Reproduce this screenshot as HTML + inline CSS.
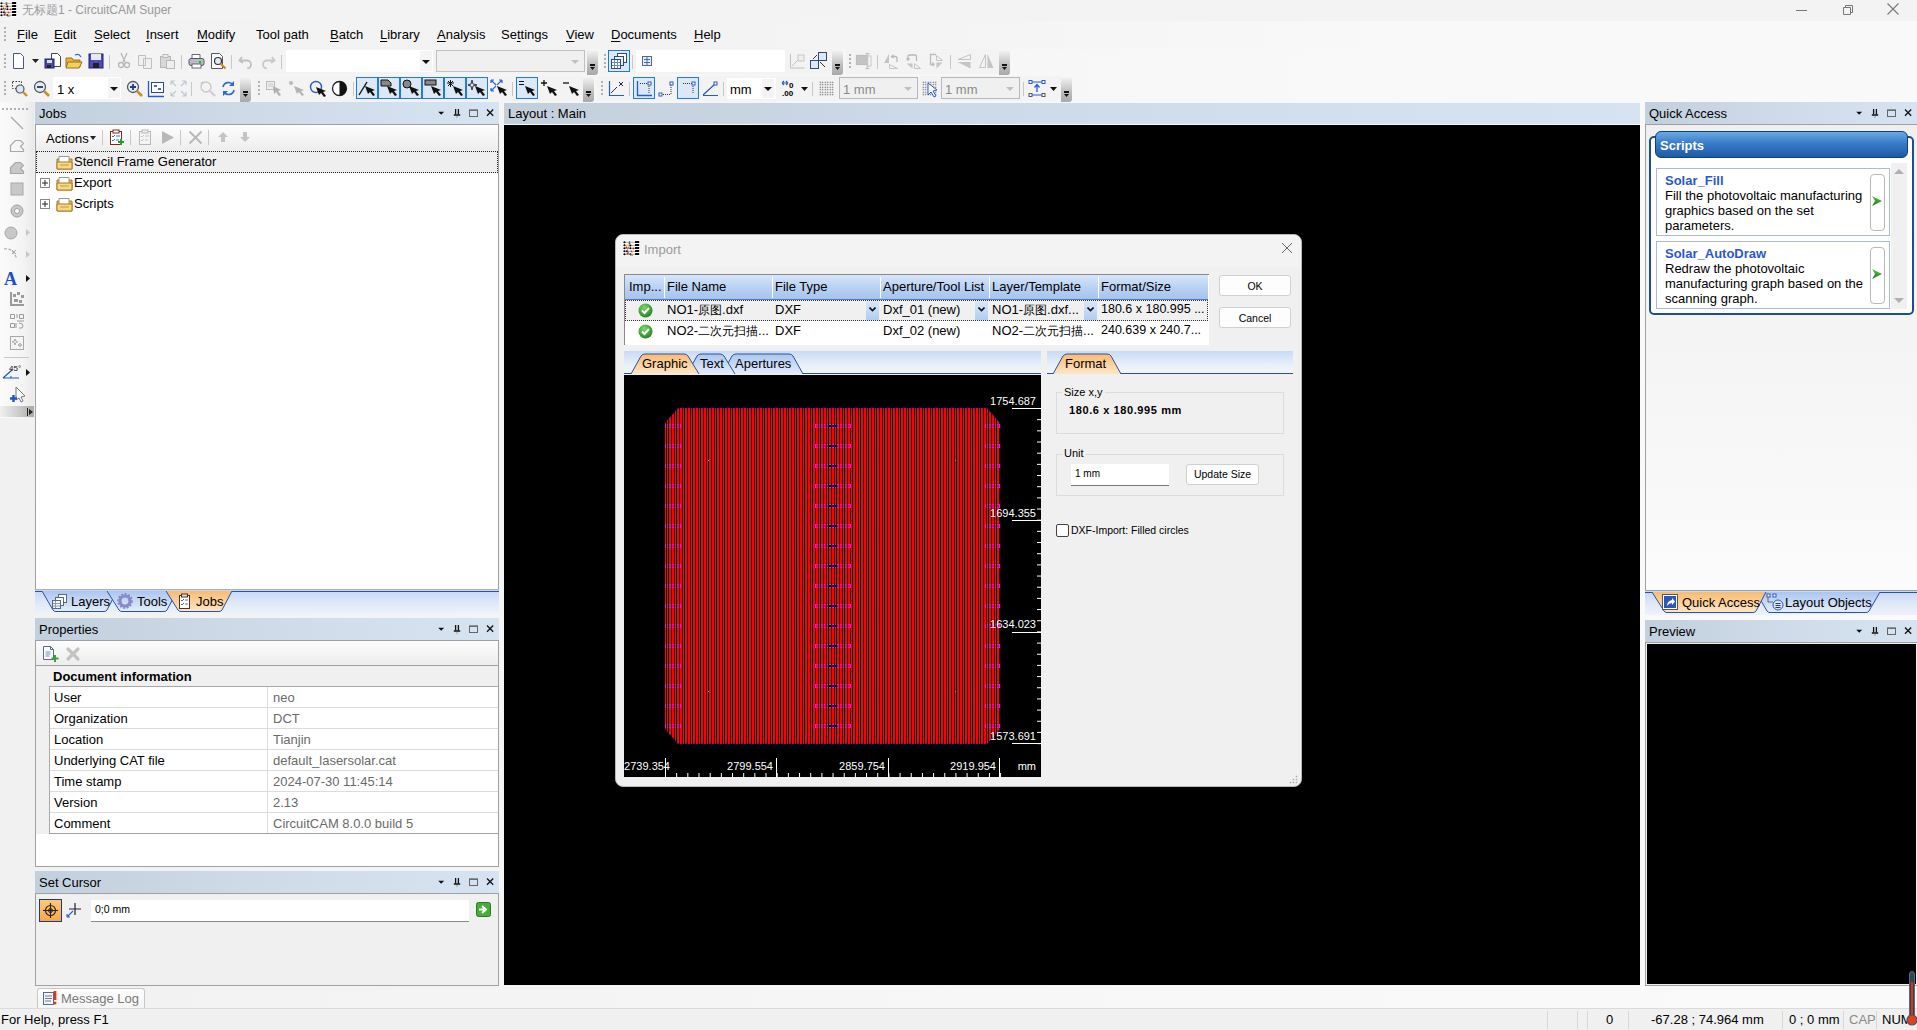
<!DOCTYPE html>
<html><head><meta charset="utf-8">
<style>
*{margin:0;padding:0;box-sizing:border-box}
html,body{width:1917px;height:1030px;overflow:hidden;background:linear-gradient(90deg,#f1f1f1,#f7f7f7 50%,#fafafa);font-family:"Liberation Sans",sans-serif;font-size:13px;color:#000;position:relative}
.a{position:absolute}
.t13{font-size:13px;line-height:15px;white-space:nowrap}
.t12{font-size:12px;line-height:14px;white-space:nowrap}
.t11{font-size:11px;line-height:13px;white-space:nowrap}
.menu{color:#000}
.menu u{text-decoration:underline;text-underline-offset:2px}
.grip{width:2px;background:repeating-linear-gradient(180deg,#b0b0b0 0 2px,transparent 2px 4px)}
.hgrip{height:2px;background:repeating-linear-gradient(90deg,#b0b0b0 0 2px,transparent 2px 4px)}
.sep{width:1px;background:#c8c8c8}
.hdr{height:22px;background:linear-gradient(90deg,#c2cfdc 0%,#cfdbe8 50%,#d6e3f0 100%);font-size:13px;line-height:22px;padding-left:4px;padding-top:1px;white-space:nowrap}
.ovf{width:11px;border-radius:0 3px 3px 0;background:linear-gradient(180deg,#f4f4f4,#bdbdbd 60%,#a9a9a9)}
.ovf::after{content:"";position:absolute;left:3px;bottom:5px;width:5px;height:5px;background:linear-gradient(#111 0 1px,transparent 1px 2px,#111 2px) ;clip-path:polygon(0 0,100% 0,100% 40%,50% 100%,0 40%)}
.ovf::before{content:"";position:absolute;left:3px;bottom:10px;width:5px;height:1px;background:#111}
.hl{background:#dce8f5;border:1px solid #1f7ae0}
</style></head><body>

<!-- TITLE BAR -->
<div class="a" style="left:0;top:0;width:1917px;height:21px;background:#f3f3f3"></div>
<svg class="a" style="left:0;top:1px" width="17" height="16" viewBox="0 0 17 16"><rect x="0" y="0.5" width="17" height="16" fill="#fff"/><path d="M0 2.3h12M0 5.3h12M0 8.3h12M0 11.3h12M0 14.3h12" stroke="#aaa" stroke-width="1"/><rect x="12" y="1" width="4.2" height="2" rx=".6" fill="#000"/><rect x="12" y="4" width="4.2" height="2" rx=".6" fill="#000"/><rect x="12" y="7" width="4.2" height="2" rx=".6" fill="#000"/><rect x="12" y="10" width="4.2" height="2" rx=".6" fill="#000"/><rect x="12" y="13" width="4.2" height="2" rx=".6" fill="#000"/><circle cx="1.5" cy="2.3" r="1" fill="#000"/><circle cx="1.5" cy="5.3" r="1" fill="#000"/><circle cx="1.5" cy="8.3" r="1" fill="#000"/><circle cx="1.5" cy="11.3" r="1" fill="#000"/><circle cx="1.5" cy="14.3" r="1" fill="#000"/><circle cx="7.4" cy="8.3" r="1" fill="#000"/><circle cx="7.4" cy="14.3" r="1" fill="#000"/><circle cx="4" cy="11.3" r="1" fill="#000"/><circle cx="7.4" cy="5.5" r="1" fill="#000"/><path d="M6 6.5q-3 3 0 7t4 1" fill="none" stroke="#888" stroke-width="1"/><circle cx="6.5" cy="2" r=".9" fill="#0aa"/><circle cx="6.5" cy="3.6" r=".9" fill="#f00"/><circle cx="4.5" cy="5.3" r="1" fill="#ee0"/><circle cx="3.5" cy="7.5" r="1" fill="#f00"/><circle cx="10.5" cy="8.4" r=".9" fill="#c00"/><circle cx="8.5" cy="11.3" r=".9" fill="#a0a"/><circle cx="9" cy="12.5" r="1" fill="#ee0"/><circle cx="4.5" cy="13.5" r=".9" fill="#c00"/></svg>
<div class="a t12" style="left:22px;top:3px;color:#9a9a9a;white-space:nowrap">无标题1 - CircuitCAM Super</div>
<svg class="a" style="left:1795px;top:3px" width="14" height="14"><path d="M1 7.5h11" stroke="#777" stroke-width="1"/></svg>
<svg class="a" style="left:1841px;top:3px" width="14" height="14"><path d="M2.5 4.5h7v7h-7z M4.5 4.5v-2h7v7h-2" fill="none" stroke="#777" stroke-width="1"/></svg>
<svg class="a" style="left:1886px;top:2px" width="14" height="14"><path d="M1.5 1.5l11 11M12.5 1.5l-11 11" stroke="#777" stroke-width="1.1"/></svg>

<!-- MENU BAR -->
<div class="a" style="left:0;top:21px;width:1917px;height:28px;background:linear-gradient(90deg,#f2f2f2 0%,#f3f3f3 40%,#f9f9f9 75%,#f9f9f9 100%)"></div>
<div class="a grip" style="left:4px;top:27px;height:14px"></div>
<div class="a t13 menu" style="left:17px;top:27px"><u>F</u>ile</div>
<div class="a t13 menu" style="left:54px;top:27px"><u>E</u>dit</div>
<div class="a t13 menu" style="left:94px;top:27px"><u>S</u>elect</div>
<div class="a t13 menu" style="left:146px;top:27px"><u>I</u>nsert</div>
<div class="a t13 menu" style="left:197px;top:27px"><u>M</u>odify</div>
<div class="a t13 menu" style="left:256px;top:27px">Tool <u>p</u>ath</div>
<div class="a t13 menu" style="left:330px;top:27px"><u>B</u>atch</div>
<div class="a t13 menu" style="left:380px;top:27px"><u>L</u>ibrary</div>
<div class="a t13 menu" style="left:437px;top:27px"><u>A</u>nalysis</div>
<div class="a t13 menu" style="left:501px;top:27px">Se<u>t</u>tings</div>
<div class="a t13 menu" style="left:566px;top:27px"><u>V</u>iew</div>
<div class="a t13 menu" style="left:611px;top:27px"><u>D</u>ocuments</div>
<div class="a t13 menu" style="left:694px;top:27px"><u>H</u>elp</div>

<!-- TOOLBAR AREA -->
<div class="a" style="left:0;top:49px;width:1917px;height:53px;background:linear-gradient(90deg,#f4f4f4 0%,#f6f6f6 40%,#f9f9f9 75%,#f9f9f9 100%)"></div>
<!-- toolbar band row1 -->
<div class="a" style="left:2px;top:49px;width:585px;height:25px;background:#f3f3f3;border-radius:3px 0 0 3px"></div>
<div class="a ovf" style="left:587px;top:50px;height:25px"></div>
<div class="a grip" style="left:4px;top:54px;height:14px"></div>
<!-- new doc -->
<svg class="a" style="left:11px;top:53px" width="16" height="16"><path d="M2.5 0.5h7l3 3v12h-10z" fill="#fff" stroke="#4a5a7a"/></svg>
<svg class="a" style="left:32px;top:59px" width="7" height="4"><path d="M0 0h7l-3.5 4z" fill="#222"/></svg>
<svg class="a" style="left:44px;top:52px" width="18" height="18"><path d="M7.5 1.5h6l3 3v10h-9z" fill="#fff" stroke="#445"/><rect x="1" y="7" width="9" height="9" fill="#4a4aa8" stroke="#22226a"/><rect x="3" y="8" width="5" height="3" fill="#ddd"/><rect x="3" y="13" width="4" height="3" fill="#222"/></svg>
<svg class="a" style="left:65px;top:52px" width="18" height="18"><path d="M1 6h6l1 2h7v7H1z" fill="#e8b23c" stroke="#a07010"/><path d="M3 10h14l-3 6H1z" fill="#f5cf60" stroke="#a07010"/><path d="M10 3q4-2 6 2" fill="none" stroke="#2a6ad0" stroke-width="1.3"/></svg>
<svg class="a" style="left:88px;top:53px" width="16" height="16"><rect x="1" y="1" width="14" height="14" fill="#4a4ab8" stroke="#22226a"/><rect x="3" y="1" width="10" height="6" fill="#e8e8f0"/><rect x="5" y="10" width="6" height="5" fill="#222"/></svg>
<div class="a sep" style="left:109px;top:55px;height:14px"></div>
<svg class="a" style="left:116px;top:52px" width="16" height="18"><path d="M5 1l4 9M11 1l-4 9" stroke="#b8b8b8" stroke-width="1.3"/><circle cx="5" cy="13" r="2.5" fill="none" stroke="#b8b8b8" stroke-width="1.3"/><circle cx="11" cy="13" r="2.5" fill="none" stroke="#b8b8b8" stroke-width="1.3"/></svg>
<svg class="a" style="left:137px;top:54px" width="16" height="16"><path d="M1.5 1.5h7v10h-7z M6.5 4.5h8v10h-8z" fill="#f0f0f0" stroke="#c0c0c0"/></svg>
<svg class="a" style="left:159px;top:53px" width="17" height="17"><rect x="1.5" y="3.5" width="10" height="11" fill="#d8d8d8" stroke="#b8b8b8"/><rect x="4" y="1.5" width="5" height="3" fill="#eee" stroke="#b8b8b8"/><rect x="7.5" y="7.5" width="8" height="8" fill="#eee" stroke="#b8b8b8"/></svg>
<div class="a sep" style="left:181px;top:55px;height:14px"></div>
<svg class="a" style="left:188px;top:53px" width="17" height="16"><path d="M4 1.5h8v4H4z" fill="#fff" stroke="#667"/><rect x="1" y="5.5" width="15" height="7" rx="2" fill="#b8bcc8" stroke="#556"/><rect x="4" y="11" width="9" height="4" fill="#fff" stroke="#667"/><rect x="11" y="8" width="2" height="2" fill="#0c0"/></svg>
<svg class="a" style="left:210px;top:53px" width="17" height="17"><path d="M1.5 0.5h8l3 3v12h-11z" fill="#fff" stroke="#556"/><circle cx="8" cy="8" r="3.5" fill="#dfeaf8" stroke="#333" stroke-width="1.2"/><path d="M10.5 10.5l5 5" stroke="#c88a20" stroke-width="2.2"/></svg>
<div class="a sep" style="left:231px;top:55px;height:14px"></div>
<svg class="a" style="left:238px;top:54px" width="15" height="15"><path d="M4 3L1.5 6.5 5 9M2 6.5h7a4 4 0 010 8" fill="none" stroke="#c0c0c0" stroke-width="1.8"/></svg>
<svg class="a" style="left:261px;top:54px" width="15" height="15"><path d="M11 3l2.5 3.5L10 9M13 6.5H6a4 4 0 000 8" fill="none" stroke="#c8c8c8" stroke-width="1.8"/></svg>
<div class="a sep" style="left:281px;top:55px;height:14px"></div>
<div class="a" style="left:286px;top:50px;width:147px;height:22px;background:#fff"></div>
<div class="a" style="left:420px;top:51px;width:12px;height:20px;background:#f4f4f4"></div>
<svg class="a" style="left:422px;top:60px" width="8" height="4"><path d="M0 0h8l-4 4z" fill="#111"/></svg>
<div class="a" style="left:436px;top:50px;width:149px;height:22px;background:#f0f0f0;border:1px solid #c0c0c0"></div>
<svg class="a" style="left:571px;top:60px" width="8" height="4"><path d="M0 0h8l-4 4z" fill="#c0c0c0"/></svg>

<!-- row1 toolbar 2 -->
<div class="a" style="left:601px;top:49px;width:231px;height:25px;background:#f3f3f3;border-radius:3px 0 0 3px"></div>
<div class="a ovf" style="left:832px;top:50px;height:25px"></div>
<div class="a grip" style="left:604px;top:54px;height:14px"></div>
<div class="a hl" style="left:608px;top:50px;width:22px;height:22px"></div>
<svg class="a" style="left:611px;top:53px" width="17" height="16"><rect x="6.5" y="0.5" width="9" height="9" fill="#fff" stroke="#2a4a7a"/><rect x="3.5" y="3.5" width="9" height="9" fill="#e8eef8" stroke="#2a4a7a"/><rect x="0.5" y="6.5" width="9" height="9" fill="#fff" stroke="#2a4a7a"/><path d="M1 9.5h8M1 12.5h8M3.5 7v8M6.5 7v8" stroke="#6a8ab8"/></svg>
<div class="a sep" style="left:632px;top:55px;height:14px"></div>
<div class="a" style="left:636px;top:50px;width:149px;height:22px;background:#fff"></div>
<svg class="a" style="left:642px;top:56px" width="10" height="10"><rect x="0.5" y="0.5" width="9" height="9" fill="#e8eef8" stroke="#4a6a9a"/><path d="M2 3.5h6M2 6.5h6M5 1v8" stroke="#4a6a9a"/></svg>
<svg class="a" style="left:789px;top:53px" width="16" height="16"><path d="M1.5 1v14h14" fill="none" stroke="#c0c0c0"/><path d="M3 13l6-6" stroke="#c0c0c0"/><rect x="9" y="2" width="6" height="6" fill="#eee" stroke="#c8c8c8"/></svg>
<svg class="a" style="left:810px;top:52px" width="18" height="18"><rect x="8.5" y="0.5" width="8" height="8" fill="#dde8f5" stroke="#2a4a7a"/><rect x="0.5" y="8.5" width="8" height="8" fill="#dde8f5" stroke="#2a4a7a"/><path d="M10 10l5 5M3 7l4-4" stroke="#333"/></svg>

<!-- row1 toolbar 3 -->
<div class="a" style="left:846px;top:49px;width:153px;height:25px;background:#f3f3f3;border-radius:3px 0 0 3px"></div>
<div class="a ovf" style="left:999px;top:50px;height:25px"></div>
<div class="a grip" style="left:849px;top:54px;height:14px"></div>
<svg class="a" style="left:855px;top:52px" width="18" height="18"><rect x="1.5" y="3.5" width="11" height="9" fill="#c4c4c4" stroke="#bdbdbd" stroke-width="1.2"/><path d="M12.5 2v14M10.5 1.5h4M10.5 16.5h4" stroke="#c0c0c0" stroke-width="1.2"/><rect x="12" y="4" width="4" height="10" fill="none" stroke="#c8c8c8"/></svg>
<div class="a sep" style="left:877px;top:55px;height:14px"></div>
<svg class="a" style="left:883px;top:52px" width="18" height="18"><path d="M1 11L6 2v9z" fill="#c4c4c4"/><path d="M6.5 12.5v4h8z" fill="none" stroke="#c4c4c4"/><path d="M14 10V6.5q0-2-2-2H9M10.5 3L8.5 4.5 10.5 6" fill="none" stroke="#b8b8b8" stroke-width="1.3"/></svg>
<svg class="a" style="left:905px;top:52px" width="18" height="18"><path d="M1.5 11.5h6v5z" fill="#c4c4c4"/><path d="M9.5 11.5v5h6z" fill="none" stroke="#c4c4c4"/><path d="M3 8V4.5q0-1.5 1.5-1.5H10q1.5 0 1.5 1.5V9M1.5 6.5L3 8l1.5-1.5" fill="none" stroke="#b8b8b8" stroke-width="1.3"/></svg>
<svg class="a" style="left:928px;top:52px" width="18" height="18"><path d="M8 2.5H2.5v10H6M4.5 10.5L6 12.5 4.5 14" fill="none" stroke="#bcbcbc" stroke-width="1.3"/><path d="M8.5 3.5v5h6z" fill="none" stroke="#c4c4c4"/><path d="M8.5 10.5h6l-6 6z" fill="#c4c4c4"/></svg>
<div class="a sep" style="left:950px;top:55px;height:14px"></div>
<svg class="a" style="left:956px;top:52px" width="18" height="18"><path d="M14.5 2.5v5H2z" fill="none" stroke="#c4c4c4"/><path d="M14.5 10v6.5L1.5 10z" fill="#c4c4c4"/></svg>
<svg class="a" style="left:978px;top:52px" width="18" height="18"><path d="M7.5 2.5v13H1.5z" fill="none" stroke="#c4c4c4"/><path d="M9.5 2v14h6z" fill="#c4c4c4"/></svg>
<!-- ROW 2 -->
<div class="a" style="left:2px;top:76px;width:238px;height:25px;background:#f3f3f3;border-radius:3px 0 0 3px"></div>
<div class="a ovf" style="left:240px;top:77px;height:25px"></div>
<div class="a grip" style="left:4px;top:81px;height:14px"></div>
<svg class="a" style="left:11px;top:80px" width="18" height="18"><rect x="1.5" y="1.5" width="9" height="7" fill="none" stroke="#333" stroke-dasharray="1.5 1.5"/><circle cx="9" cy="9" r="4" fill="#dbe8f8" stroke="#555" stroke-width="1.2"/><path d="M12 12l4 4" stroke="#c8902a" stroke-width="2.4"/></svg>
<svg class="a" style="left:33px;top:80px" width="18" height="18"><circle cx="7" cy="7" r="5.5" fill="#e4eef8" stroke="#556" stroke-width="1.3"/><path d="M4 7h6" stroke="#334" stroke-width="1.8"/><path d="M11 11l5 5" stroke="#c8902a" stroke-width="2.6"/></svg>
<div class="a" style="left:53px;top:77px;width:68px;height:22px;background:#fff"></div>
<div class="a" style="left:108px;top:78px;width:12px;height:20px;background:#f4f4f4"></div>
<div class="a t13" style="left:57px;top:82px">1 x</div>
<svg class="a" style="left:110px;top:87px" width="8" height="4"><path d="M0 0h8l-4 4z" fill="#111"/></svg>
<svg class="a" style="left:126px;top:80px" width="18" height="18"><circle cx="7" cy="7" r="5.5" fill="#e4eef8" stroke="#556" stroke-width="1.3"/><path d="M4 7h6M7 4v6" stroke="#2a3a7a" stroke-width="1.8"/><path d="M11 11l5 5" stroke="#c8902a" stroke-width="2.6"/></svg>
<svg class="a" style="left:147px;top:80px" width="18" height="18"><path d="M1.5 1v16M1 16.5h16" stroke="#2a5ac8" stroke-width="1.3"/><rect x="4.5" y="2.5" width="12" height="10" fill="#fff" stroke="#2a4a8a"/><rect x="7" y="5" width="3" height="2" fill="#4a6aaa"/><rect x="11" y="8" width="3" height="2" fill="#4a6aaa"/></svg>
<svg class="a" style="left:170px;top:80px" width="17" height="17"><path d="M1 1l5 5M16 1l-5 5M1 16l5-5M16 16l-5-5M1 1h4M1 1v4M16 1h-4M16 1v4M1 16h4M1 16v-4M16 16h-4M16 16v-4" stroke="#c0c8d0" stroke-width="1.2"/></svg>
<div class="a sep" style="left:191px;top:82px;height:14px"></div>
<svg class="a" style="left:199px;top:80px" width="17" height="17"><circle cx="7" cy="7" r="5" fill="none" stroke="#c8c8c8" stroke-width="1.3"/><path d="M11 11l5 5" stroke="#d0d0d0" stroke-width="2.4"/><path d="M1 4l3-3v3z" fill="#c8c8c8"/></svg>
<svg class="a" style="left:220px;top:80px" width="17" height="17"><path d="M3 7a5.5 5.5 0 0110-2M14 10a5.5 5.5 0 01-10 2" fill="none" stroke="#2a6ad8" stroke-width="1.6"/><path d="M14 1v5h-5z M3 16v-5h5z" fill="#2a6ad8"/></svg>

<div class="a" style="left:254px;top:76px;width:329px;height:25px;background:#f3f3f3;border-radius:3px 0 0 3px"></div>
<div class="a ovf" style="left:583px;top:77px;height:25px"></div>
<div class="a grip" style="left:258px;top:81px;height:14px"></div>
<svg class="a" style="left:265px;top:80px" width="18" height="18"><rect x="1.5" y="1.5" width="8" height="8" fill="#eee" stroke="#bbb"/><path d="M3 4h5M3 6h5" stroke="#c8c8c8"/><path d="M8 6l8 4-3 1 3 4-2 1-3-4-2 2z" fill="#b0b0b0"/></svg>
<svg class="a" style="left:288px;top:80px" width="18" height="18"><circle cx="3" cy="3" r="2" fill="#bbb"/><path d="M6 6l10 4-3 1 3 4-2 1-3-4-2 2z" fill="#b4b4b4"/></svg>
<svg class="a" style="left:309px;top:80px" width="18" height="18"><circle cx="7" cy="7" r="5.5" fill="none" stroke="#2a5ad0" stroke-width="1.4"/><path d="M7 7l10 4-3 1 3 4-2 1-3-4-2 2z" fill="#111"/></svg>
<svg class="a" style="left:331px;top:80px" width="17" height="17"><circle cx="8.5" cy="8.5" r="7" fill="#fff" stroke="#222" stroke-width="1.3"/><path d="M8.5 1.5a7 7 0 010 14z" fill="#111"/></svg>
<div class="a sep" style="left:353px;top:82px;height:14px"></div>
<div class="a hl" style="left:356px;top:77px;width:22px;height:22px"></div>
<div class="a hl" style="left:378px;top:77px;width:22px;height:22px"></div>
<div class="a hl" style="left:400px;top:77px;width:22px;height:22px"></div>
<div class="a hl" style="left:422px;top:77px;width:22px;height:22px"></div>
<div class="a hl" style="left:444px;top:77px;width:22px;height:22px"></div>
<div class="a hl" style="left:466px;top:77px;width:22px;height:22px"></div>
<svg class="a" style="left:358px;top:79px" width="18" height="18"><path d="M1 16L9 3" stroke="#111" stroke-width="1.4"/><path d="M7 7l10 4-3 1 3 4-2 1-3-4-2 2z" fill="#111"/></svg>
<svg class="a" style="left:380px;top:79px" width="18" height="18"><path d="M1 1h7l3 3v3H1z" fill="#888" stroke="#111"/><path d="M7 7l10 4-3 1 3 4-2 1-3-4-2 2z" fill="#111"/></svg>
<svg class="a" style="left:402px;top:79px" width="18" height="18"><circle cx="5" cy="5" r="4" fill="#888" stroke="#111"/><path d="M7 7l10 4-3 1 3 4-2 1-3-4-2 2z" fill="#111"/></svg>
<svg class="a" style="left:424px;top:79px" width="18" height="18"><rect x="1" y="1" width="11" height="5" fill="#888" stroke="#111"/><path d="M7 7l10 4-3 1 3 4-2 1-3-4-2 2z" fill="#111"/></svg>
<svg class="a" style="left:446px;top:79px" width="18" height="18"><path d="M1 4h7M4.5 1v7M2 2l5 5M7 2L2 7" stroke="#111"/><path d="M7 7l10 4-3 1 3 4-2 1-3-4-2 2z" fill="#111"/></svg>
<svg class="a" style="left:468px;top:79px" width="18" height="18"><path d="M4 1l1 4 4 1-4 1-1 4-1-4-4-1 4-1z" fill="none" stroke="#334"/><path d="M7 7l10 4-3 1 3 4-2 1-3-4-2 2z" fill="#111"/></svg>
<svg class="a" style="left:490px;top:79px" width="18" height="18"><path d="M1 1l5 5M1 1h3M1 1v3M12 1L7 6M12 1h-3M12 1v3M1 12l5-5M1 12h3M1 12V9" stroke="#2a6ad8" stroke-width="1.2"/><path d="M7 7l10 4-3 1 3 4-2 1-3-4-2 2z" fill="#111"/></svg>
<div class="a sep" style="left:512px;top:82px;height:14px"></div>
<div class="a hl" style="left:516px;top:77px;width:22px;height:22px"></div>
<svg class="a" style="left:518px;top:79px" width="18" height="18"><path d="M1 2.5h5M1 5.5h5" stroke="#111" stroke-width="1.2"/><path d="M7 7l10 4-3 1 3 4-2 1-3-4-2 2z" fill="#111"/></svg>
<svg class="a" style="left:540px;top:79px" width="18" height="18"><path d="M1 4h6M4 1v6" stroke="#111" stroke-width="1.3"/><path d="M7 7l10 4-3 1 3 4-2 1-3-4-2 2z" fill="#111"/></svg>
<svg class="a" style="left:562px;top:79px" width="18" height="18"><path d="M1 4h6" stroke="#111" stroke-width="1.3"/><path d="M7 7l10 4-3 1 3 4-2 1-3-4-2 2z" fill="#111"/></svg>

<div class="a" style="left:597px;top:76px;width:464px;height:25px;background:#f3f3f3;border-radius:3px 0 0 3px"></div>
<div class="a ovf" style="left:1061px;top:77px;height:25px"></div>
<div class="a grip" style="left:601px;top:81px;height:14px"></div>
<svg class="a" style="left:608px;top:80px" width="17" height="17"><path d="M1.5 1v15M1 15.5h15" stroke="#2a5ac8" stroke-width="1.2"/><path d="M3 13l6-6" stroke="#333"/><path d="M11 2l4 4M15 2l-4 4" stroke="#222"/></svg>
<div class="a sep" style="left:629px;top:82px;height:14px"></div>
<div class="a hl" style="left:633px;top:77px;width:22px;height:22px"></div>
<svg class="a" style="left:636px;top:80px" width="17" height="17"><path d="M1.5 1v15M1 15.5h15" stroke="#2a5ac8" stroke-width="1.3"/><path d="M4 3.5h9M13 4v9" stroke="#333" stroke-dasharray="1 1"/><rect x="12" y="2" width="3" height="3" fill="#fff" stroke="#2a5ac8"/></svg>
<svg class="a" style="left:658px;top:80px" width="17" height="17"><path d="M3 14.5h9M13 14v-11" stroke="#333" stroke-dasharray="1 1"/><rect x="12" y="2" width="3" height="3" fill="#fff" stroke="#2a5ac8"/><rect x="1" y="13" width="3" height="3" fill="#fff" stroke="#2a5ac8"/></svg>
<div class="a hl" style="left:677px;top:77px;width:22px;height:22px"></div>
<svg class="a" style="left:680px;top:80px" width="17" height="17"><path d="M3 3.5h9M13 4v9" stroke="#333" stroke-dasharray="1 1"/><rect x="12" y="2" width="3" height="3" fill="#fff" stroke="#2a5ac8"/></svg>
<svg class="a" style="left:702px;top:80px" width="17" height="17"><path d="M1 15.5h15M1 15L13 4" stroke="#2a5ac8" stroke-width="1.2"/><rect x="12" y="2" width="3" height="3" fill="#fff" stroke="#2a5ac8"/></svg>
<div class="a sep" style="left:723px;top:82px;height:14px"></div>
<div class="a" style="left:727px;top:78px;width:49px;height:21px;background:#fff"></div>
<div class="a" style="left:762px;top:79px;width:12px;height:19px;background:#f4f4f4"></div>
<div class="a t13" style="left:730px;top:82px">mm</div>
<svg class="a" style="left:764px;top:87px" width="8" height="4"><path d="M0 0h8l-4 4z" fill="#111"/></svg>
<svg class="a" style="left:781px;top:80px" width="17" height="17"><path d="M1 3h6M1 3l2-2M1 3l2 2M7 3L5 1M7 3L5 5" stroke="#2a5ad0" stroke-width="1.1"/><text x="8" y="8" font-size="8" font-family="Liberation Sans" font-weight="bold">0</text><text x="1" y="16" font-size="8" font-family="Liberation Sans" font-weight="bold">.00</text></svg>
<svg class="a" style="left:801px;top:87px" width="7" height="4"><path d="M0 0h7l-3.5 4z" fill="#111"/></svg>
<div class="a sep" style="left:812px;top:82px;height:14px"></div>
<div class="a" style="left:819px;top:81px;width:15px;height:15px;background:radial-gradient(circle,#333 0.6px,transparent 0.9px) 0 0/2.5px 2.5px;opacity:.8"></div>
<div class="a" style="left:839px;top:77px;width:79px;height:22px;background:#f0f0f0;border:1px solid #b8b8b8"></div>
<div class="a t13" style="left:843px;top:82px;color:#8a8a8a">1 mm</div>
<svg class="a" style="left:904px;top:87px" width="8" height="4"><path d="M0 0h8l-4 4z" fill="#c0c0c0"/></svg>
<div class="a" style="left:922px;top:81px;width:15px;height:15px;background:radial-gradient(circle,#333 0.6px,transparent 0.9px) 0 0/2.5px 2.5px;opacity:.8"></div>
<svg class="a" style="left:927px;top:82px" width="12" height="16"><path d="M1 1l9 7-4 1 3 5-2 1-3-5-3 3z" fill="#fff" stroke="#2a5ad0"/></svg>
<div class="a" style="left:941px;top:77px;width:79px;height:22px;background:#f0f0f0;border:1px solid #b8b8b8"></div>
<div class="a t13" style="left:945px;top:82px;color:#8a8a8a">1 mm</div>
<svg class="a" style="left:1006px;top:87px" width="8" height="4"><path d="M0 0h8l-4 4z" fill="#c0c0c0"/></svg>
<div class="a sep" style="left:1023px;top:82px;height:14px"></div>
<svg class="a" style="left:1028px;top:80px" width="18" height="18"><path d="M3 2h12M3 15h12" stroke="#2a5ad0" stroke-width="1.2"/><rect x="1" y="0.5" width="3" height="3" fill="#fff" stroke="#2a5ad0"/><rect x="14" y="0.5" width="3" height="3" fill="#fff" stroke="#2a5ad0"/><rect x="1" y="13.5" width="3" height="3" fill="#fff" stroke="#556"/><rect x="14" y="13.5" width="3" height="3" fill="#fff" stroke="#556"/><path d="M9 12V5M6.5 7.5L9 4.5l2.5 3" stroke="#2a5ad0" stroke-width="1.3" fill="none"/></svg>
<svg class="a" style="left:1050px;top:87px" width="7" height="4"><path d="M0 0h7l-3.5 4z" fill="#111"/></svg>

<!-- LEFT VERTICAL TOOLBAR -->
<div class="a" style="left:0;top:102px;width:34px;height:316px;background:linear-gradient(90deg,#fbfbfb,#f3f3f3 70%,#e9e9e9)"></div>
<div class="a hgrip" style="left:2px;top:108px;width:27px"></div>
<svg class="a" style="left:9px;top:115px" width="16" height="16"><path d="M2 2l12 12" stroke="#a8a8a8" stroke-width="1.3"/></svg>
<svg class="a" style="left:9px;top:137px" width="16" height="16"><path d="M1.5 14.5v-6l5-5h5l3 3-3 3 3 3v2z" fill="none" stroke="#a8a8a8" stroke-width="1.2"/></svg>
<svg class="a" style="left:9px;top:159px" width="16" height="16"><path d="M1.5 14.5v-6l5-5h5l3 3-3 3 3 3v2z" fill="#c8c8c8" stroke="#a8a8a8" stroke-width="1.2"/></svg>
<svg class="a" style="left:9px;top:181px" width="16" height="16"><rect x="2" y="2" width="12" height="12" fill="#c8c8c8" stroke="#a8a8a8"/></svg>
<svg class="a" style="left:9px;top:203px" width="16" height="16"><circle cx="8" cy="8" r="6" fill="#c8c8c8" stroke="#a0a0a0"/><circle cx="8" cy="8" r="2.5" fill="#fff" stroke="#a0a0a0"/></svg>
<svg class="a" style="left:3px;top:225px" width="16" height="16"><circle cx="8" cy="8" r="6" fill="#c8c8c8" stroke="#a8a8a8"/></svg>
<svg class="a" style="left:26px;top:229px" width="4" height="7"><path d="M0 0l4 3.5L0 7z" fill="#c8c8c8"/></svg>
<svg class="a" style="left:3px;top:247px" width="16" height="16"><path d="M1 2q8-2 13 10" fill="none" stroke="#a8a8a8" stroke-width="1.1" stroke-dasharray="3 1.5"/><path d="M9 3l4 4M13 3L9 7" stroke="#aaa"/></svg>
<svg class="a" style="left:26px;top:251px" width="4" height="7"><path d="M0 0l4 3.5L0 7z" fill="#c8c8c8"/></svg>
<div class="a" style="left:4px;top:270px;font-family:'Liberation Serif',serif;font-weight:bold;font-size:18px;line-height:18px;color:#1a4ed0">A</div>
<svg class="a" style="left:26px;top:275px" width="4" height="7"><path d="M0 0l4 3.5L0 7z" fill="#111"/></svg>
<svg class="a" style="left:9px;top:291px" width="16" height="16"><path d="M1 1h2v12h12v2H1z" fill="#9a9a9a"/><rect x="4" y="3" width="3" height="3" fill="#9a9a9a"/><rect x="8" y="1" width="3" height="3" fill="#9a9a9a"/><rect x="12" y="4" width="3" height="3" fill="#9a9a9a"/><rect x="5" y="8" width="4" height="3" fill="#9a9a9a"/><rect x="10" y="9" width="3" height="3" fill="#9a9a9a"/></svg>
<svg class="a" style="left:9px;top:313px" width="16" height="16"><path d="M1.5 1.5h4v4h-4zM10.5 1.5h4v4h-4zM1.5 10.5h4v4h-4z" fill="none" stroke="#9a9a9a"/><path d="M8 1v4M8 8h7M10 10q4 0 4 3t-4 2M7 10v5" stroke="#9a9a9a" fill="none"/></svg>
<svg class="a" style="left:9px;top:335px" width="16" height="16"><rect x="1.5" y="1.5" width="13" height="13" fill="#f4f4f4" stroke="#a8a8a8"/><path d="M6 4l.8 2 2 .8-2 .8L6 10l-.8-2.4-2-.8 2-.8zM11 8l.6 1.5 1.4.5-1.4.5-.6 1.5-.6-1.5-1.4-.5 1.4-.5z" fill="none" stroke="#999" stroke-width=".8"/></svg>
<div class="a" style="left:4px;top:357px;width:25px;height:1px;background:#c8c8c8"></div>
<svg class="a" style="left:2px;top:362px" width="20" height="18"><path d="M1 16h16M1 16l9-8" stroke="#1f55c8" stroke-width="1.2"/><text x="7" y="9" font-size="8" font-family="Liberation Sans" fill="#111">45°</text><path d="M9 14v2" stroke="#1f55c8"/></svg>
<svg class="a" style="left:26px;top:369px" width="4" height="7"><path d="M0 0l4 3.5L0 7z" fill="#111"/></svg>
<svg class="a" style="left:8px;top:386px" width="18" height="18"><path d="M8 1l9 9-4 1 2 4-2 1-2-4-3 2z" fill="#fff" stroke="#666" stroke-width=".9"/><path d="M2 12.5h7M5.5 9v7" stroke="#1f55c8" stroke-width="2.4"/></svg>
<div class="a" style="left:0;top:406px;width:34px;height:11px;background:linear-gradient(90deg,#f0f0f0,#c8c8c8 60%,#a8a8a8)"></div>
<svg class="a" style="left:27px;top:408px" width="6" height="8"><path d="M0 0h1v8H0zM2 1l4 3-4 3z" fill="#222"/></svg>

<!-- JOBS PANEL -->
<div class="a hdr" style="left:35px;top:102px;width:464px">Jobs</div>
<svg class="a" style="left:435px;top:102px" width="62" height="22" viewBox="0 0 62 22"><path d="M3.2 9.8h6l-3 3z" fill="#111"/><path d="M20.6 7v5.5M23.4 7v5.5" stroke="#111" stroke-width="1.3"/><path d="M18.8 13h6.4" stroke="#111" stroke-width="1.5"/><path d="M22 14.2v1.6" stroke="#777" stroke-width=".8"/><rect x="34.5" y="8" width="8" height="6.5" fill="none" stroke="#666" stroke-width="1"/><path d="M34 8.3h9" stroke="#666" stroke-width="1.2"/><path d="M52 7.5l6.2 6.2M58.2 7.5L52 13.7" stroke="#111" stroke-width="1.3"/></svg>
<div class="a" style="left:35px;top:124px;width:464px;height:466px;background:#fff;border:1px solid #a0a0a0;border-bottom-color:#b0b0b0"></div>
<div class="a" style="left:36px;top:125px;width:462px;height:26px;background:linear-gradient(180deg,#fdfdfd,#ededed)"></div>
<div class="a t13" style="left:46px;top:131px">Actions</div>
<svg class="a" style="left:90px;top:136px" width="6" height="4"><path d="M0 0h6l-3 4z" fill="#222"/></svg>
<div class="a sep" style="left:102px;top:130px;height:15px"></div>
<svg class="a" style="left:109px;top:129px" width="17" height="17"><rect x="1.5" y="2.5" width="11" height="13" fill="#fff" stroke="#7a2a1a"/><rect x="4" y="1" width="6" height="3" fill="#fff" stroke="#7a2a1a"/><path d="M3 7l1 1 2-2M3 11l1 1 2-2M7 7h4M7 11h3" stroke="#2a5ad0" stroke-width=".9" fill="none"/><path d="M12 10v6M9 13h6" stroke="#2a9a2a" stroke-width="2"/></svg>
<div class="a sep" style="left:130px;top:130px;height:15px"></div>
<svg class="a" style="left:137px;top:129px" width="17" height="17"><rect x="2.5" y="2.5" width="11" height="13" fill="#f4f4f4" stroke="#b8b8b8"/><rect x="5" y="1" width="6" height="3" fill="#eee" stroke="#b8b8b8"/><path d="M4 7l1 1 2-2M4 11l1 1 2-2M8 7h4M8 11h3" stroke="#c0c0c0" stroke-width=".9" fill="none"/></svg>
<svg class="a" style="left:160px;top:130px" width="15" height="15"><path d="M2 1l12 6.5L2 14z" fill="#b8b8b8"/></svg>
<div class="a sep" style="left:180px;top:130px;height:15px"></div>
<svg class="a" style="left:188px;top:130px" width="15" height="15"><path d="M1.5 1.5l12 12M13.5 1.5l-12 12" stroke="#b8b8b8" stroke-width="1.8"/></svg>
<div class="a sep" style="left:208px;top:130px;height:15px"></div>
<svg class="a" style="left:217px;top:131px" width="12" height="12"><path d="M6 1L1 6h3v5h4V6h3z" fill="#c4c4c4"/></svg>
<svg class="a" style="left:239px;top:131px" width="12" height="12"><path d="M6 11L1 6h3V1h4v5h3z" fill="#c4c4c4"/></svg>

<div class="a" style="left:36px;top:151px;width:462px;height:22px;background:#efefef;border:1px dotted #222"></div>
<svg class="a" style="left:56px;top:154px" width="17" height="16"><path d="M1 5h15v10H1z" fill="#e8b848" stroke="#a87a20"/><path d="M3 2.5h10v7H3z" fill="#fff" stroke="#999"/><path d="M1 8h15v7H1z" fill="#f6d888" stroke="#a87a20"/><path d="M4 11h9" stroke="#c89838"/></svg>
<div class="a t13" style="left:74px;top:154px">Stencil Frame Generator</div>
<svg class="a" style="left:40px;top:178px" width="10" height="10"><rect x=".5" y=".5" width="9" height="9" fill="#fff" stroke="#888"/><path d="M2 5h6M5 2v6" stroke="#222"/></svg>
<svg class="a" style="left:56px;top:175px" width="17" height="16"><path d="M1 5h15v10H1z" fill="#e8b848" stroke="#a87a20"/><path d="M3 2.5h10v7H3z" fill="#fff" stroke="#999"/><path d="M1 8h15v7H1z" fill="#f6d888" stroke="#a87a20"/><path d="M4 11h9" stroke="#c89838"/></svg>
<div class="a t13" style="left:74px;top:175px">Export</div>
<svg class="a" style="left:40px;top:199px" width="10" height="10"><rect x=".5" y=".5" width="9" height="9" fill="#fff" stroke="#888"/><path d="M2 5h6M5 2v6" stroke="#222"/></svg>
<svg class="a" style="left:56px;top:196px" width="17" height="16"><path d="M1 5h15v10H1z" fill="#e8b848" stroke="#a87a20"/><path d="M3 2.5h10v7H3z" fill="#fff" stroke="#999"/><path d="M1 8h15v7H1z" fill="#f6d888" stroke="#a87a20"/><path d="M4 11h9" stroke="#c89838"/></svg>
<div class="a t13" style="left:74px;top:196px">Scripts</div>

<!-- LEFT TAB STRIP -->
<svg class="a" style="left:35px;top:590px" width="464" height="25" viewBox="0 0 464 25">
<defs>
<linearGradient id="strip" x1="0" y1="0" x2="0" y2="1"><stop offset="0" stop-color="#c4d7f4"/><stop offset=".5" stop-color="#dde8f8"/><stop offset="1" stop-color="#eef3fb"/></linearGradient>
<linearGradient id="tabb" x1="0" y1="0" x2="0" y2="1"><stop offset="0" stop-color="#aac6f0"/><stop offset="1" stop-color="#e4edfa"/></linearGradient>
<linearGradient id="tabo" x1="0" y1="0" x2="0" y2="1"><stop offset="0" stop-color="#f9bb70"/><stop offset="1" stop-color="#fde6c8"/></linearGradient>
</defs>
<rect x="0" y="0" width="464" height="24" fill="url(#strip)"/>
<path d="M0 1.5h7M197 1.5H464" stroke="#2a50a8" stroke-width="1"/>
<path d="M7 1L18 20q1 1.5 3 1.5h48q2 0 3-1.5L82 1" fill="url(#tabb)" stroke="#2a50a8"/>
<path d="M72 1L84 20q1 1.5 3 1.5h42q2 0 3-1.5L142 1" fill="url(#tabb)" stroke="#2a50a8"/>
<path d="M131 1L143 20q1 1.5 3 1.5h38q2 0 3-1.5L197 1" fill="url(#tabo)" stroke="#2a50a8"/>
</svg>
<svg class="a" style="left:52px;top:594px" width="15" height="15"><rect x="6.5" y=".5" width="8" height="8" fill="#fff" stroke="#556a8a"/><rect x="3.5" y="3.5" width="8" height="8" fill="#fff" stroke="#556a8a"/><rect x=".5" y="6.5" width="8" height="8" fill="#f4f6fa" stroke="#556a8a"/><path d="M1 9.5h7M1 12h7M3.5 7v7" stroke="#8a9ab8"/></svg>
<div class="a t13" style="left:71px;top:594px">Layers</div>
<svg class="a" style="left:117px;top:593px" width="16" height="16"><circle cx="8" cy="8" r="5" fill="none" stroke="#8a8ac8" stroke-width="3.2"/><circle cx="8" cy="8" r="7" fill="none" stroke="#8a8ac8" stroke-width="1.8" stroke-dasharray="2 1.6"/></svg>
<div class="a t13" style="left:137px;top:594px">Tools</div>
<svg class="a" style="left:178px;top:593px" width="13" height="16"><rect x="1.5" y="2.5" width="10" height="13" fill="#fff" stroke="#5a2a1a"/><rect x="3.5" y="1" width="6" height="3" fill="#ddd" stroke="#5a2a1a"/><path d="M3 7l1 1 2-2M3 11l1 1 2-2M7 7h3M7 11h3" stroke="#2a5ad0" stroke-width=".9" fill="none"/></svg>
<div class="a t13" style="left:196px;top:594px">Jobs</div>

<!-- PROPERTIES -->
<div class="a hdr" style="left:35px;top:618px;width:464px">Properties</div>
<svg class="a" style="left:435px;top:618px" width="62" height="22" viewBox="0 0 62 22"><path d="M3.2 9.8h6l-3 3z" fill="#111"/><path d="M20.6 7v5.5M23.4 7v5.5" stroke="#111" stroke-width="1.3"/><path d="M18.8 13h6.4" stroke="#111" stroke-width="1.5"/><path d="M22 14.2v1.6" stroke="#777" stroke-width=".8"/><rect x="34.5" y="8" width="8" height="6.5" fill="none" stroke="#666" stroke-width="1"/><path d="M34 8.3h9" stroke="#666" stroke-width="1.2"/><path d="M52 7.5l6.2 6.2M58.2 7.5L52 13.7" stroke="#111" stroke-width="1.3"/></svg>
<div class="a" style="left:35px;top:640px;width:464px;height:227px;background:#fff;border:1px solid #a0a0a0"></div>
<div class="a" style="left:36px;top:641px;width:462px;height:25px;background:linear-gradient(180deg,#fdfdfd,#ededed);border-bottom:1px solid #a0a0a0"></div>
<svg class="a" style="left:42px;top:645px" width="18" height="18"><path d="M1.5 1.5h7l3 3v10h-10z" fill="#fff" stroke="#5a6a8a"/><path d="M8.5 1.5v3h3" fill="none" stroke="#5a6a8a"/><path d="M3.5 7h5M3.5 9h5M3.5 11h4" stroke="#7a8aa8"/><path d="M13 10v7M9.5 13.5h7" stroke="#3aa03a" stroke-width="2"/></svg>
<svg class="a" style="left:65px;top:646px" width="16" height="16"><path d="M3 3l10 10M13 3L3 13" stroke="#c4c4c4" stroke-width="3.2" stroke-linecap="round"/></svg>
<div class="a" style="left:36px;top:666px;width:13px;height:168px;background:#f0f0f0"></div>
<div class="a" style="left:49px;top:666px;width:449px;height:21px;background:#f0f0f0;border-bottom:1px solid #a8a8a8"></div>
<div class="a t13" style="left:53px;top:669px;font-weight:bold">Document information</div>
<div class="a" style="left:49px;top:687px;width:449px;height:147px;background:#fff;border-left:1px solid #a8a8a8;border-bottom:1px solid #a0a0a0;
background-image:repeating-linear-gradient(180deg,transparent 0 20px,#dcdcdc 20px 21px)"></div>
<div class="a" style="left:267px;top:687px;width:1px;height:146px;background:#dcdcdc"></div>
<div class="a t13" style="left:54px;top:690px">User</div>
<div class="a t13" style="left:54px;top:711px">Organization</div>
<div class="a t13" style="left:54px;top:732px">Location</div>
<div class="a t13" style="left:54px;top:753px">Underlying CAT file</div>
<div class="a t13" style="left:54px;top:774px">Time stamp</div>
<div class="a t13" style="left:54px;top:795px">Version</div>
<div class="a t13" style="left:54px;top:816px">Comment</div>
<div class="a t13" style="left:273px;top:690px;color:#6a6a6a">neo</div>
<div class="a t13" style="left:273px;top:711px;color:#6a6a6a">DCT</div>
<div class="a t13" style="left:273px;top:732px;color:#6a6a6a">Tianjin</div>
<div class="a t13" style="left:273px;top:753px;color:#6a6a6a">default_lasersolar.cat</div>
<div class="a t13" style="left:273px;top:774px;color:#6a6a6a">2024-07-30 11:45:14</div>
<div class="a t13" style="left:273px;top:795px;color:#6a6a6a">2.13</div>
<div class="a t13" style="left:273px;top:816px;color:#6a6a6a">CircuitCAM 8.0.0 build 5</div>

<!-- SET CURSOR -->
<div class="a hdr" style="left:35px;top:871px;width:464px">Set Cursor</div>
<svg class="a" style="left:435px;top:871px" width="62" height="22" viewBox="0 0 62 22"><path d="M3.2 9.8h6l-3 3z" fill="#111"/><path d="M20.6 7v5.5M23.4 7v5.5" stroke="#111" stroke-width="1.3"/><path d="M18.8 13h6.4" stroke="#111" stroke-width="1.5"/><path d="M22 14.2v1.6" stroke="#777" stroke-width=".8"/><rect x="34.5" y="8" width="8" height="6.5" fill="none" stroke="#666" stroke-width="1"/><path d="M34 8.3h9" stroke="#666" stroke-width="1.2"/><path d="M52 7.5l6.2 6.2M58.2 7.5L52 13.7" stroke="#111" stroke-width="1.3"/></svg>
<div class="a" style="left:35px;top:893px;width:464px;height:93px;background:#f0f0f0;border:1px solid #a0a0a0"></div>
<div class="a" style="left:39px;top:899px;width:23px;height:23px;background:linear-gradient(180deg,#fcc878,#f8a848);border:1px solid #1a3a8a"></div>
<svg class="a" style="left:42px;top:902px" width="17" height="17"><circle cx="8.5" cy="8.5" r="5" fill="none" stroke="#222" stroke-width="1.1"/><circle cx="8.5" cy="8.5" r="2" fill="none" stroke="#222"/><path d="M8.5 1v15M1 8.5h15" stroke="#222" stroke-width="1.1"/></svg>
<svg class="a" style="left:65px;top:901px" width="18" height="18"><path d="M10 2v12M4 8h12" stroke="#223" stroke-width="1.2"/><path d="M2 16l6-6M2 16h3M2 16v-3" stroke="#2a5ad0" stroke-width="1.1"/></svg>
<div class="a" style="left:91px;top:900px;width:378px;height:22px;background:#fff;border-bottom:1px solid #8a8a8a"></div>
<div class="a t11" style="left:95px;top:903px;font-size:10.5px">0;0 mm</div>
<svg class="a" style="left:476px;top:902px" width="16" height="16"><rect x=".5" y=".5" width="14" height="14" rx="2" fill="#4aaa3a" stroke="#2a7a2a"/><path d="M3 7.5h5M6 4l4 3.5L6 11" stroke="#fff" stroke-width="2" fill="none"/></svg>

<!-- MESSAGE LOG TAB -->
<div class="a" style="left:37px;top:988px;width:108px;height:21px;background:linear-gradient(180deg,#fdfdfd,#f4f4f4);border:1px solid #c8c8c8;border-bottom:none;border-radius:3px 3px 0 0"></div>
<svg class="a" style="left:42px;top:990px" width="16" height="16"><rect x="1.5" y="2.5" width="10" height="12" fill="#f4f6fa" stroke="#556a8a"/><path d="M3 6h7M3 8.5h7M3 11h6" stroke="#6a7a98"/><path d="M13 1v9" stroke="#e03a1a" stroke-width="2.8"/><circle cx="13" cy="13" r="1.5" fill="#e03a1a"/></svg>
<div class="a t13" style="left:61px;top:991px;color:#7a7a7a">Message Log</div>

<!-- LAYOUT MAIN -->
<div class="a hdr" style="left:504px;top:103px;width:1136px;height:21px;line-height:21px;padding-top:0;background:linear-gradient(90deg,#c3cfdb 0%,#cddae7 40%,#d6e3f0 100%)">Layout : Main</div>
<div class="a" style="left:504px;top:125px;width:1136px;height:860px;background:#000"></div>

<!-- QUICK ACCESS -->
<div class="a hdr" style="left:1645px;top:102px;width:272px">Quick Access</div>
<svg class="a" style="left:1853px;top:102px" width="62" height="22" viewBox="0 0 62 22"><path d="M3.2 9.8h6l-3 3z" fill="#111"/><path d="M20.6 7v5.5M23.4 7v5.5" stroke="#111" stroke-width="1.3"/><path d="M18.8 13h6.4" stroke="#111" stroke-width="1.5"/><path d="M22 14.2v1.6" stroke="#777" stroke-width=".8"/><rect x="34.5" y="8" width="8" height="6.5" fill="none" stroke="#666" stroke-width="1"/><path d="M34 8.3h9" stroke="#666" stroke-width="1.2"/><path d="M52 7.5l6.2 6.2M58.2 7.5L52 13.7" stroke="#111" stroke-width="1.3"/></svg>
<div class="a" style="left:1645px;top:124px;width:272px;height:467px;background:linear-gradient(180deg,#efefef,#fbfbfb);border-left:1px solid #a0a0a0;border-top:1px solid #a0a0a0;border-bottom:1px solid #a0a0a0"></div>
<div class="a" style="left:1649px;top:136px;width:265px;height:179px;background:#fff;border:2px solid #1c4f8f;border-radius:5px"></div>
<div class="a" style="left:1655px;top:131px;width:253px;height:27px;background:linear-gradient(180deg,#6aaae6 0%,#3a7cc8 45%,#1e5aa6 100%);border:1px solid #0f3f80;border-radius:6px"></div>
<div class="a t13" style="left:1660px;top:138px;color:#fff;font-weight:bold">Scripts</div>
<!-- item 1 -->
<div class="a" style="left:1656px;top:168px;width:234px;height:68px;background:#fff;border:1px solid #a8b8e8"></div>
<div class="a t13" style="left:1665px;top:173px;color:#2a58d0;font-weight:bold">Solar_Fill</div>
<div class="a t13" style="left:1665px;top:188px">Fill the photovoltaic manufacturing</div>
<div class="a t13" style="left:1665px;top:203px">graphics based on the set</div>
<div class="a t13" style="left:1665px;top:218px">parameters.</div>
<div class="a" style="left:1870px;top:174px;width:15px;height:57px;background:#fff;border:1px solid #b8b8b8;border-radius:4px"></div>
<svg class="a" style="left:1871px;top:195px" width="12" height="12"><defs><linearGradient id="garr" x1="0" y1="0" x2="0" y2="1"><stop offset="0" stop-color="#5ac84a"/><stop offset="1" stop-color="#1a7a1a"/></linearGradient></defs><path d="M1 1l10 5-10 5 3-5z" fill="url(#garr)"/></svg>
<!-- item 2 -->
<div class="a" style="left:1656px;top:241px;width:234px;height:68px;background:#fff;border:1px solid #a8b8e8"></div>
<div class="a t13" style="left:1665px;top:246px;color:#2a58d0;font-weight:bold">Solar_AutoDraw</div>
<div class="a t13" style="left:1665px;top:261px">Redraw the photovoltaic</div>
<div class="a t13" style="left:1665px;top:276px">manufacturing graph based on the</div>
<div class="a t13" style="left:1665px;top:291px">scanning graph.</div>
<div class="a" style="left:1870px;top:247px;width:15px;height:57px;background:#fff;border:1px solid #b8b8b8;border-radius:4px"></div>
<svg class="a" style="left:1871px;top:268px" width="12" height="12"><path d="M1 1l10 5-10 5 3-5z" fill="url(#garr)"/></svg>
<!-- scrollbar -->
<div class="a" style="left:1891px;top:163px;width:16px;height:146px;background:#f0f0f0"></div>
<svg class="a" style="left:1894px;top:168px" width="10" height="7"><path d="M0 6l5-5 5 5z" fill="#b0b0b0"/></svg>
<svg class="a" style="left:1894px;top:297px" width="10" height="7"><path d="M0 1l5 5 5-5z" fill="#b0b0b0"/></svg>

<!-- QA tab strip -->
<svg class="a" style="left:1645px;top:591px" width="272" height="25" viewBox="0 0 272 25">
<rect x="0" y="0" width="272" height="24" fill="url(#strip)"/>
<path d="M0 1.5h7M235 1.5H272" stroke="#2a50a8" stroke-width="1"/>
<path d="M111 1L122 20q1 1.5 3 1.5h96q2 0 3-1.5L235 1" fill="url(#tabb)" stroke="#2a50a8"/>
<path d="M7 1L19 20q1 1.5 3 1.5h86q2 0 3-1.5L121 1" fill="url(#tabo)" stroke="#2a50a8"/>
</svg>
<svg class="a" style="left:1662px;top:594px" width="16" height="16"><rect x=".5" y=".5" width="15" height="15" fill="#fff" stroke="#555"/><rect x="2" y="2" width="12" height="12" fill="#2a5ab8"/><path d="M5 12q0-5 5-6v-2l3 3.5-3 3.5v-2q-3 0-5 3z" fill="#fff"/></svg>
<div class="a t13" style="left:1682px;top:595px">Quick Access</div>
<svg class="a" style="left:1766px;top:593px" width="18" height="18"><rect x="1" y="1" width="3" height="3" fill="#fff" stroke="#2a5ab8"/><rect x="7" y="1" width="3" height="3" fill="#fff" stroke="#2a5ab8"/><path d="M2 4v5h5" stroke="#666" fill="none"/><circle cx="12" cy="12" r="5" fill="#d8e4f4" stroke="#2a5ab8"/><path d="M9.5 10.5h5M9.5 12.5h5M9.5 14.5h5" stroke="#2a3a6a"/></svg>
<div class="a t13" style="left:1785px;top:595px">Layout Objects</div>

<!-- PREVIEW -->
<div class="a hdr" style="left:1645px;top:620px;width:272px">Preview</div>
<svg class="a" style="left:1853px;top:620px" width="62" height="22" viewBox="0 0 62 22"><path d="M3.2 9.8h6l-3 3z" fill="#111"/><path d="M20.6 7v5.5M23.4 7v5.5" stroke="#111" stroke-width="1.3"/><path d="M18.8 13h6.4" stroke="#111" stroke-width="1.5"/><path d="M22 14.2v1.6" stroke="#777" stroke-width=".8"/><rect x="34.5" y="8" width="8" height="6.5" fill="none" stroke="#666" stroke-width="1"/><path d="M34 8.3h9" stroke="#666" stroke-width="1.2"/><path d="M52 7.5l6.2 6.2M58.2 7.5L52 13.7" stroke="#111" stroke-width="1.3"/></svg>
<div class="a" style="left:1645px;top:642px;width:272px;height:344px;background:#f0f0f0;border:1px solid #a0a0a0;border-right:none"></div>
<div class="a" style="left:1647px;top:644px;width:269px;height:340px;background:#000"></div>

<!-- IMPORT DIALOG -->
<div class="a" style="left:615px;top:234px;width:687px;height:553px;background:#f0f0f0;border:1px solid #b8b8b8;border-radius:8px;overflow:hidden">
  <div class="a" style="left:0;top:0;width:687px;height:32px;background:#f3f3f3"></div>
</div>
<svg class="a" style="left:623px;top:240px" width="17" height="16" viewBox="0 0 17 16"><rect x="0" y="0.5" width="17" height="16" fill="#fff"/><path d="M0 2.3h12M0 5.3h12M0 8.3h12M0 11.3h12M0 14.3h12" stroke="#aaa" stroke-width="1"/><rect x="12" y="1" width="4.2" height="2" rx=".6" fill="#000"/><rect x="12" y="4" width="4.2" height="2" rx=".6" fill="#000"/><rect x="12" y="7" width="4.2" height="2" rx=".6" fill="#000"/><rect x="12" y="10" width="4.2" height="2" rx=".6" fill="#000"/><rect x="12" y="13" width="4.2" height="2" rx=".6" fill="#000"/><circle cx="1.5" cy="2.3" r="1" fill="#000"/><circle cx="1.5" cy="5.3" r="1" fill="#000"/><circle cx="1.5" cy="8.3" r="1" fill="#000"/><circle cx="1.5" cy="11.3" r="1" fill="#000"/><circle cx="1.5" cy="14.3" r="1" fill="#000"/><circle cx="7.4" cy="8.3" r="1" fill="#000"/><circle cx="7.4" cy="14.3" r="1" fill="#000"/><circle cx="4" cy="11.3" r="1" fill="#000"/><circle cx="7.4" cy="5.5" r="1" fill="#000"/><path d="M6 6.5q-3 3 0 7t4 1" fill="none" stroke="#888" stroke-width="1"/><circle cx="6.5" cy="2" r=".9" fill="#0aa"/><circle cx="6.5" cy="3.6" r=".9" fill="#f00"/><circle cx="4.5" cy="5.3" r="1" fill="#ee0"/><circle cx="3.5" cy="7.5" r="1" fill="#f00"/><circle cx="10.5" cy="8.4" r=".9" fill="#c00"/><circle cx="8.5" cy="11.3" r=".9" fill="#a0a"/><circle cx="9" cy="12.5" r="1" fill="#ee0"/><circle cx="4.5" cy="13.5" r=".9" fill="#c00"/></svg>
<div class="a t13" style="left:644px;top:242px;color:#9a9a9a">Import</div>
<svg class="a" style="left:1281px;top:242px" width="12" height="12"><path d="M1 1l10 10M11 1L1 11" stroke="#666" stroke-width="1"/></svg>

<!-- list view -->
<div class="a" style="left:624px;top:274px;width:585px;height:71px;background:#fff;border-left:1px solid #8a8a8a;border-top:1px solid #8a8a8a"></div>
<div class="a" style="left:625px;top:275px;width:583px;height:25px;background:linear-gradient(180deg,#d6e6fa 0%,#bcd4f4 45%,#a6c3ee 100%);border-bottom:1px solid #4a7ac8"></div>
<div class="a" style="left:664px;top:277px;width:1px;height:21px;background:#fff"></div>
<div class="a" style="left:772px;top:277px;width:1px;height:21px;background:#fff"></div>
<div class="a" style="left:880px;top:277px;width:1px;height:21px;background:#fff"></div>
<div class="a" style="left:989px;top:277px;width:1px;height:21px;background:#fff"></div>
<div class="a" style="left:1098px;top:277px;width:1px;height:21px;background:#fff"></div>
<div class="a t13" style="left:629px;top:279px">Imp...</div>
<div class="a t13" style="left:667px;top:279px">File Name</div>
<div class="a t13" style="left:775px;top:279px">File Type</div>
<div class="a t13" style="left:883px;top:279px">Aperture/Tool List</div>
<div class="a t13" style="left:992px;top:279px">Layer/Template</div>
<div class="a t13" style="left:1101px;top:279px">Format/Size</div>
<div class="a" style="left:625px;top:300px;width:583px;height:21px;background:#f0f0f0;border:1px dotted #333"></div>
<div class="a" style="left:866px;top:301px;width:13px;height:19px;background:linear-gradient(180deg,#dae8f8,#b0ccf0)"></div>
<div class="a" style="left:975px;top:301px;width:13px;height:19px;background:linear-gradient(180deg,#dae8f8,#b0ccf0)"></div>
<div class="a" style="left:1084px;top:301px;width:13px;height:19px;background:linear-gradient(180deg,#dae8f8,#b0ccf0)"></div>
<svg class="a" style="left:869px;top:307px" width="7" height="5"><path d="M.5 .5l3 3 3-3" fill="none" stroke="#111" stroke-width="1.6"/></svg>
<svg class="a" style="left:978px;top:307px" width="7" height="5"><path d="M.5 .5l3 3 3-3" fill="none" stroke="#111" stroke-width="1.6"/></svg>
<svg class="a" style="left:1087px;top:307px" width="7" height="5"><path d="M.5 .5l3 3 3-3" fill="none" stroke="#111" stroke-width="1.6"/></svg>
<svg class="a" style="left:638px;top:303px" width="15" height="15"><defs><radialGradient id="gck" cx=".4" cy=".3" r=".8"><stop offset="0" stop-color="#7ad86a"/><stop offset="1" stop-color="#1a7a1a"/></radialGradient></defs><circle cx="7.5" cy="7.5" r="7" fill="url(#gck)"/><path d="M4 7.5l2.5 2.5 4.5-5" fill="none" stroke="#fff" stroke-width="2"/></svg>
<svg class="a" style="left:638px;top:324px" width="15" height="15"><circle cx="7.5" cy="7.5" r="7" fill="url(#gck)"/><path d="M4 7.5l2.5 2.5 4.5-5" fill="none" stroke="#fff" stroke-width="2"/></svg>
<div class="a t13" style="left:667px;top:302px">NO1-<span style="font-size:12px">原图</span>.dxf</div>
<div class="a t13" style="left:775px;top:302px">DXF</div>
<div class="a t13" style="left:883px;top:302px">Dxf_01 (new)</div>
<div class="a t13" style="left:992px;top:302px">NO1-<span style="font-size:12px">原图</span>.dxf...</div>
<div class="a t13" style="left:1101px;top:302px;font-size:12.5px">180.6 x 180.995 ...</div>
<div class="a t13" style="left:667px;top:323px">NO2-<span style="font-size:12px">二次元扫描</span>...</div>
<div class="a t13" style="left:775px;top:323px">DXF</div>
<div class="a t13" style="left:883px;top:323px">Dxf_02 (new)</div>
<div class="a t13" style="left:992px;top:323px">NO2-<span style="font-size:12px">二次元扫描</span>...</div>
<div class="a t13" style="left:1101px;top:323px;font-size:12.5px">240.639 x 240.7...</div>

<div class="a" style="left:1219px;top:275px;width:72px;height:21px;background:#fdfdfd;border:1px solid #d0d0d0;border-radius:3px"></div>
<div class="a t13" style="left:1219px;top:279px;width:72px;text-align:center;font-size:10.5px">OK</div>
<div class="a" style="left:1219px;top:307px;width:72px;height:21px;background:#fdfdfd;border:1px solid #d0d0d0;border-radius:3px"></div>
<div class="a t13" style="left:1219px;top:311px;width:72px;text-align:center;font-size:10.5px">Cancel</div>

<!-- tabs -->
<svg class="a" style="left:624px;top:351px" width="417" height="24" viewBox="0 0 417 24">
<defs>
<linearGradient id="dstrip" x1="0" y1="0" x2="0" y2="1"><stop offset="0" stop-color="#c8dbf6"/><stop offset=".6" stop-color="#e8eff9"/><stop offset="1" stop-color="#f4f7fc"/></linearGradient>
</defs>
<rect x="0" y="0" width="417" height="23" fill="url(#dstrip)"/>
<path d="M0 22.5h7M179 22.5H417" stroke="#2a50a8"/>
<path d="M98 23L108 5q1.5-2 4-2h53q2.5 0 4 2L179 23" fill="url(#tabb)" stroke="#2a50a8"/>
<path d="M63 23L73 5q1.5-2 4-2h19q2.5 0 4 2L111 23" fill="url(#tabb)" stroke="#2a50a8"/>
<path d="M7 23L17 5q1.5-2 4-2h39q2.5 0 4 2L75 23" fill="url(#tabo)" stroke="#2a50a8"/>
</svg>
<div class="a t13" style="left:642px;top:356px">Graphic</div>
<div class="a t13" style="left:700px;top:356px">Text</div>
<div class="a t13" style="left:735px;top:356px">Apertures</div>

<svg class="a" style="left:1047px;top:351px" width="246" height="24" viewBox="0 0 246 24">
<rect x="0" y="0" width="246" height="23" fill="url(#dstrip)"/>
<path d="M0 22.5h6M70 22.5H246" stroke="#2a50a8"/>
<path d="M6 23L16 5q2-2 4-2h40q3 0 4 2l10 18" fill="url(#tabo)" stroke="#2a50a8"/>
</svg>
<div class="a t13" style="left:1065px;top:356px">Format</div>

<!-- format content -->
<div class="a" style="left:1056px;top:392px;width:228px;height:42px;border:1px solid #dcdcdc"></div>
<div class="a t11" style="left:1062px;top:386px;background:#f0f0f0;padding:0 2px">Size x,y</div>
<div class="a t11" style="left:1069px;top:404px;font-weight:bold;letter-spacing:.6px">180.6 x 180.995 mm</div>
<div class="a" style="left:1056px;top:454px;width:228px;height:42px;border:1px solid #dcdcdc"></div>
<div class="a t11" style="left:1062px;top:447px;background:#f0f0f0;padding:0 2px">Unit</div>
<div class="a" style="left:1071px;top:464px;width:98px;height:22px;background:#fff;border-bottom:1px solid #7a7a7a"></div>
<div class="a t11" style="left:1075px;top:467px;font-size:10px">1 mm</div>
<div class="a" style="left:1186px;top:464px;width:73px;height:21px;background:#fdfdfd;border:1px solid #d0d0d0;border-radius:3px"></div>
<div class="a t11" style="left:1186px;top:468px;width:73px;text-align:center;font-size:10.5px">Update Size</div>
<div class="a" style="left:1056px;top:524px;width:13px;height:13px;background:#fff;border:1px solid #444;border-radius:2px"></div>
<div class="a t11" style="left:1071px;top:524px;font-size:10.5px">DXF-Import: Filled circles</div>

<!-- resize grip -->
<svg class="a" style="left:1289px;top:775px" width="10" height="10"><path d="M7 1h1v1H7zM4 4h1v1H4zM7 4h1v1H7zM1 7h1v1H1zM4 7h1v1H4zM7 7h1v1H7z" fill="#aaa" stroke="#aaa" stroke-width=".5"/></svg>

<svg class="a" style="left:624px;top:375px" width="417" height="402" viewBox="0 0 417 402">
<defs><pattern id="stripes" x="0" y="0" width="8" height="4" patternUnits="userSpaceOnUse"><rect x="0" y="0" width="2" height="4" fill="#ff0000"/><rect x="3" y="0" width="1" height="4" fill="#ff0000"/><rect x="5" y="0" width="2" height="4" fill="#ff0000"/></pattern>
<pattern id="mstripes" x="0" y="0" width="8" height="4" patternUnits="userSpaceOnUse"><rect x="0" y="0" width="2" height="4" fill="#ff00ff"/><rect x="3" y="0" width="1" height="4" fill="#ff00ff"/><rect x="5" y="0" width="2" height="4" fill="#ff00ff"/></pattern></defs>
<rect x="0" y="0" width="417" height="402" fill="#000"/>
<polygon points="41,48 54,33 363,33 376,48 376,354 363,369 54,369 41,354" fill="url(#stripes)"/>
<path d="M41 48L54 33H363L376 48M376 354L363 369H54L41 354" fill="none" stroke="#0000ff" stroke-width="1" stroke-dasharray="1.5 2.5"/>
<rect x="41" y="49" width="16" height="1.2" fill="url(#mstripes)"/>
<rect x="41" y="52" width="16" height="1" fill="url(#mstripes)"/>
<rect x="41" y="49" width="1" height="4" fill="#ff00ff"/>
<rect x="56" y="49" width="1" height="4" fill="#ff00ff"/>
<rect x="191" y="49" width="36" height="1.2" fill="url(#mstripes)"/>
<rect x="191" y="52" width="36" height="1" fill="url(#mstripes)"/>
<rect x="191" y="49" width="1" height="4" fill="#ff00ff"/>
<rect x="226" y="49" width="1" height="4" fill="#ff00ff"/>
<rect x="361" y="49" width="15" height="1.2" fill="url(#mstripes)"/>
<rect x="361" y="52" width="15" height="1" fill="url(#mstripes)"/>
<rect x="361" y="49" width="1" height="4" fill="#ff00ff"/>
<rect x="375" y="49" width="1" height="4" fill="#ff00ff"/>
<rect x="205" y="50" width="7" height="2" fill="#000"/>
<rect x="41" y="69" width="16" height="1.2" fill="url(#mstripes)"/>
<rect x="41" y="72" width="16" height="1" fill="url(#mstripes)"/>
<rect x="41" y="69" width="1" height="4" fill="#ff00ff"/>
<rect x="56" y="69" width="1" height="4" fill="#ff00ff"/>
<rect x="191" y="69" width="36" height="1.2" fill="url(#mstripes)"/>
<rect x="191" y="72" width="36" height="1" fill="url(#mstripes)"/>
<rect x="191" y="69" width="1" height="4" fill="#ff00ff"/>
<rect x="226" y="69" width="1" height="4" fill="#ff00ff"/>
<rect x="361" y="69" width="15" height="1.2" fill="url(#mstripes)"/>
<rect x="361" y="72" width="15" height="1" fill="url(#mstripes)"/>
<rect x="361" y="69" width="1" height="4" fill="#ff00ff"/>
<rect x="375" y="69" width="1" height="4" fill="#ff00ff"/>
<rect x="205" y="70" width="7" height="2" fill="#000"/>
<rect x="41" y="89" width="16" height="1.2" fill="url(#mstripes)"/>
<rect x="41" y="92" width="16" height="1" fill="url(#mstripes)"/>
<rect x="41" y="89" width="1" height="4" fill="#ff00ff"/>
<rect x="56" y="89" width="1" height="4" fill="#ff00ff"/>
<rect x="191" y="89" width="36" height="1.2" fill="url(#mstripes)"/>
<rect x="191" y="92" width="36" height="1" fill="url(#mstripes)"/>
<rect x="191" y="89" width="1" height="4" fill="#ff00ff"/>
<rect x="226" y="89" width="1" height="4" fill="#ff00ff"/>
<rect x="361" y="89" width="15" height="1.2" fill="url(#mstripes)"/>
<rect x="361" y="92" width="15" height="1" fill="url(#mstripes)"/>
<rect x="361" y="89" width="1" height="4" fill="#ff00ff"/>
<rect x="375" y="89" width="1" height="4" fill="#ff00ff"/>
<rect x="205" y="90" width="7" height="2" fill="#000"/>
<rect x="41" y="109" width="16" height="1.2" fill="url(#mstripes)"/>
<rect x="41" y="112" width="16" height="1" fill="url(#mstripes)"/>
<rect x="41" y="109" width="1" height="4" fill="#ff00ff"/>
<rect x="56" y="109" width="1" height="4" fill="#ff00ff"/>
<rect x="191" y="109" width="36" height="1.2" fill="url(#mstripes)"/>
<rect x="191" y="112" width="36" height="1" fill="url(#mstripes)"/>
<rect x="191" y="109" width="1" height="4" fill="#ff00ff"/>
<rect x="226" y="109" width="1" height="4" fill="#ff00ff"/>
<rect x="361" y="109" width="15" height="1.2" fill="url(#mstripes)"/>
<rect x="361" y="112" width="15" height="1" fill="url(#mstripes)"/>
<rect x="361" y="109" width="1" height="4" fill="#ff00ff"/>
<rect x="375" y="109" width="1" height="4" fill="#ff00ff"/>
<rect x="205" y="110" width="7" height="2" fill="#000"/>
<rect x="41" y="129" width="16" height="1.2" fill="url(#mstripes)"/>
<rect x="41" y="132" width="16" height="1" fill="url(#mstripes)"/>
<rect x="41" y="129" width="1" height="4" fill="#ff00ff"/>
<rect x="56" y="129" width="1" height="4" fill="#ff00ff"/>
<rect x="191" y="129" width="36" height="1.2" fill="url(#mstripes)"/>
<rect x="191" y="132" width="36" height="1" fill="url(#mstripes)"/>
<rect x="191" y="129" width="1" height="4" fill="#ff00ff"/>
<rect x="226" y="129" width="1" height="4" fill="#ff00ff"/>
<rect x="361" y="129" width="15" height="1.2" fill="url(#mstripes)"/>
<rect x="361" y="132" width="15" height="1" fill="url(#mstripes)"/>
<rect x="361" y="129" width="1" height="4" fill="#ff00ff"/>
<rect x="375" y="129" width="1" height="4" fill="#ff00ff"/>
<rect x="205" y="130" width="7" height="2" fill="#000"/>
<rect x="41" y="149" width="16" height="1.2" fill="url(#mstripes)"/>
<rect x="41" y="152" width="16" height="1" fill="url(#mstripes)"/>
<rect x="41" y="149" width="1" height="4" fill="#ff00ff"/>
<rect x="56" y="149" width="1" height="4" fill="#ff00ff"/>
<rect x="191" y="149" width="36" height="1.2" fill="url(#mstripes)"/>
<rect x="191" y="152" width="36" height="1" fill="url(#mstripes)"/>
<rect x="191" y="149" width="1" height="4" fill="#ff00ff"/>
<rect x="226" y="149" width="1" height="4" fill="#ff00ff"/>
<rect x="361" y="149" width="15" height="1.2" fill="url(#mstripes)"/>
<rect x="361" y="152" width="15" height="1" fill="url(#mstripes)"/>
<rect x="361" y="149" width="1" height="4" fill="#ff00ff"/>
<rect x="375" y="149" width="1" height="4" fill="#ff00ff"/>
<rect x="205" y="150" width="7" height="2" fill="#000"/>
<rect x="41" y="169" width="16" height="1.2" fill="url(#mstripes)"/>
<rect x="41" y="172" width="16" height="1" fill="url(#mstripes)"/>
<rect x="41" y="169" width="1" height="4" fill="#ff00ff"/>
<rect x="56" y="169" width="1" height="4" fill="#ff00ff"/>
<rect x="191" y="169" width="36" height="1.2" fill="url(#mstripes)"/>
<rect x="191" y="172" width="36" height="1" fill="url(#mstripes)"/>
<rect x="191" y="169" width="1" height="4" fill="#ff00ff"/>
<rect x="226" y="169" width="1" height="4" fill="#ff00ff"/>
<rect x="361" y="169" width="15" height="1.2" fill="url(#mstripes)"/>
<rect x="361" y="172" width="15" height="1" fill="url(#mstripes)"/>
<rect x="361" y="169" width="1" height="4" fill="#ff00ff"/>
<rect x="375" y="169" width="1" height="4" fill="#ff00ff"/>
<rect x="205" y="170" width="7" height="2" fill="#000"/>
<rect x="41" y="189" width="16" height="1.2" fill="url(#mstripes)"/>
<rect x="41" y="192" width="16" height="1" fill="url(#mstripes)"/>
<rect x="41" y="189" width="1" height="4" fill="#ff00ff"/>
<rect x="56" y="189" width="1" height="4" fill="#ff00ff"/>
<rect x="191" y="189" width="36" height="1.2" fill="url(#mstripes)"/>
<rect x="191" y="192" width="36" height="1" fill="url(#mstripes)"/>
<rect x="191" y="189" width="1" height="4" fill="#ff00ff"/>
<rect x="226" y="189" width="1" height="4" fill="#ff00ff"/>
<rect x="361" y="189" width="15" height="1.2" fill="url(#mstripes)"/>
<rect x="361" y="192" width="15" height="1" fill="url(#mstripes)"/>
<rect x="361" y="189" width="1" height="4" fill="#ff00ff"/>
<rect x="375" y="189" width="1" height="4" fill="#ff00ff"/>
<rect x="205" y="190" width="7" height="2" fill="#000"/>
<rect x="41" y="209" width="16" height="1.2" fill="url(#mstripes)"/>
<rect x="41" y="212" width="16" height="1" fill="url(#mstripes)"/>
<rect x="41" y="209" width="1" height="4" fill="#ff00ff"/>
<rect x="56" y="209" width="1" height="4" fill="#ff00ff"/>
<rect x="191" y="209" width="36" height="1.2" fill="url(#mstripes)"/>
<rect x="191" y="212" width="36" height="1" fill="url(#mstripes)"/>
<rect x="191" y="209" width="1" height="4" fill="#ff00ff"/>
<rect x="226" y="209" width="1" height="4" fill="#ff00ff"/>
<rect x="361" y="209" width="15" height="1.2" fill="url(#mstripes)"/>
<rect x="361" y="212" width="15" height="1" fill="url(#mstripes)"/>
<rect x="361" y="209" width="1" height="4" fill="#ff00ff"/>
<rect x="375" y="209" width="1" height="4" fill="#ff00ff"/>
<rect x="205" y="210" width="7" height="2" fill="#000"/>
<rect x="41" y="229" width="16" height="1.2" fill="url(#mstripes)"/>
<rect x="41" y="232" width="16" height="1" fill="url(#mstripes)"/>
<rect x="41" y="229" width="1" height="4" fill="#ff00ff"/>
<rect x="56" y="229" width="1" height="4" fill="#ff00ff"/>
<rect x="191" y="229" width="36" height="1.2" fill="url(#mstripes)"/>
<rect x="191" y="232" width="36" height="1" fill="url(#mstripes)"/>
<rect x="191" y="229" width="1" height="4" fill="#ff00ff"/>
<rect x="226" y="229" width="1" height="4" fill="#ff00ff"/>
<rect x="361" y="229" width="15" height="1.2" fill="url(#mstripes)"/>
<rect x="361" y="232" width="15" height="1" fill="url(#mstripes)"/>
<rect x="361" y="229" width="1" height="4" fill="#ff00ff"/>
<rect x="375" y="229" width="1" height="4" fill="#ff00ff"/>
<rect x="205" y="230" width="7" height="2" fill="#000"/>
<rect x="41" y="249" width="16" height="1.2" fill="url(#mstripes)"/>
<rect x="41" y="252" width="16" height="1" fill="url(#mstripes)"/>
<rect x="41" y="249" width="1" height="4" fill="#ff00ff"/>
<rect x="56" y="249" width="1" height="4" fill="#ff00ff"/>
<rect x="191" y="249" width="36" height="1.2" fill="url(#mstripes)"/>
<rect x="191" y="252" width="36" height="1" fill="url(#mstripes)"/>
<rect x="191" y="249" width="1" height="4" fill="#ff00ff"/>
<rect x="226" y="249" width="1" height="4" fill="#ff00ff"/>
<rect x="361" y="249" width="15" height="1.2" fill="url(#mstripes)"/>
<rect x="361" y="252" width="15" height="1" fill="url(#mstripes)"/>
<rect x="361" y="249" width="1" height="4" fill="#ff00ff"/>
<rect x="375" y="249" width="1" height="4" fill="#ff00ff"/>
<rect x="205" y="250" width="7" height="2" fill="#000"/>
<rect x="41" y="269" width="16" height="1.2" fill="url(#mstripes)"/>
<rect x="41" y="272" width="16" height="1" fill="url(#mstripes)"/>
<rect x="41" y="269" width="1" height="4" fill="#ff00ff"/>
<rect x="56" y="269" width="1" height="4" fill="#ff00ff"/>
<rect x="191" y="269" width="36" height="1.2" fill="url(#mstripes)"/>
<rect x="191" y="272" width="36" height="1" fill="url(#mstripes)"/>
<rect x="191" y="269" width="1" height="4" fill="#ff00ff"/>
<rect x="226" y="269" width="1" height="4" fill="#ff00ff"/>
<rect x="361" y="269" width="15" height="1.2" fill="url(#mstripes)"/>
<rect x="361" y="272" width="15" height="1" fill="url(#mstripes)"/>
<rect x="361" y="269" width="1" height="4" fill="#ff00ff"/>
<rect x="375" y="269" width="1" height="4" fill="#ff00ff"/>
<rect x="205" y="270" width="7" height="2" fill="#000"/>
<rect x="41" y="289" width="16" height="1.2" fill="url(#mstripes)"/>
<rect x="41" y="292" width="16" height="1" fill="url(#mstripes)"/>
<rect x="41" y="289" width="1" height="4" fill="#ff00ff"/>
<rect x="56" y="289" width="1" height="4" fill="#ff00ff"/>
<rect x="191" y="289" width="36" height="1.2" fill="url(#mstripes)"/>
<rect x="191" y="292" width="36" height="1" fill="url(#mstripes)"/>
<rect x="191" y="289" width="1" height="4" fill="#ff00ff"/>
<rect x="226" y="289" width="1" height="4" fill="#ff00ff"/>
<rect x="361" y="289" width="15" height="1.2" fill="url(#mstripes)"/>
<rect x="361" y="292" width="15" height="1" fill="url(#mstripes)"/>
<rect x="361" y="289" width="1" height="4" fill="#ff00ff"/>
<rect x="375" y="289" width="1" height="4" fill="#ff00ff"/>
<rect x="205" y="290" width="7" height="2" fill="#000"/>
<rect x="41" y="309" width="16" height="1.2" fill="url(#mstripes)"/>
<rect x="41" y="312" width="16" height="1" fill="url(#mstripes)"/>
<rect x="41" y="309" width="1" height="4" fill="#ff00ff"/>
<rect x="56" y="309" width="1" height="4" fill="#ff00ff"/>
<rect x="191" y="309" width="36" height="1.2" fill="url(#mstripes)"/>
<rect x="191" y="312" width="36" height="1" fill="url(#mstripes)"/>
<rect x="191" y="309" width="1" height="4" fill="#ff00ff"/>
<rect x="226" y="309" width="1" height="4" fill="#ff00ff"/>
<rect x="361" y="309" width="15" height="1.2" fill="url(#mstripes)"/>
<rect x="361" y="312" width="15" height="1" fill="url(#mstripes)"/>
<rect x="361" y="309" width="1" height="4" fill="#ff00ff"/>
<rect x="375" y="309" width="1" height="4" fill="#ff00ff"/>
<rect x="205" y="310" width="7" height="2" fill="#000"/>
<rect x="41" y="329" width="16" height="1.2" fill="url(#mstripes)"/>
<rect x="41" y="332" width="16" height="1" fill="url(#mstripes)"/>
<rect x="41" y="329" width="1" height="4" fill="#ff00ff"/>
<rect x="56" y="329" width="1" height="4" fill="#ff00ff"/>
<rect x="191" y="329" width="36" height="1.2" fill="url(#mstripes)"/>
<rect x="191" y="332" width="36" height="1" fill="url(#mstripes)"/>
<rect x="191" y="329" width="1" height="4" fill="#ff00ff"/>
<rect x="226" y="329" width="1" height="4" fill="#ff00ff"/>
<rect x="361" y="329" width="15" height="1.2" fill="url(#mstripes)"/>
<rect x="361" y="332" width="15" height="1" fill="url(#mstripes)"/>
<rect x="361" y="329" width="1" height="4" fill="#ff00ff"/>
<rect x="375" y="329" width="1" height="4" fill="#ff00ff"/>
<rect x="205" y="330" width="7" height="2" fill="#000"/>
<rect x="41" y="349" width="16" height="1.2" fill="url(#mstripes)"/>
<rect x="41" y="352" width="16" height="1" fill="url(#mstripes)"/>
<rect x="41" y="349" width="1" height="4" fill="#ff00ff"/>
<rect x="56" y="349" width="1" height="4" fill="#ff00ff"/>
<rect x="191" y="349" width="36" height="1.2" fill="url(#mstripes)"/>
<rect x="191" y="352" width="36" height="1" fill="url(#mstripes)"/>
<rect x="191" y="349" width="1" height="4" fill="#ff00ff"/>
<rect x="226" y="349" width="1" height="4" fill="#ff00ff"/>
<rect x="361" y="349" width="15" height="1.2" fill="url(#mstripes)"/>
<rect x="361" y="352" width="15" height="1" fill="url(#mstripes)"/>
<rect x="361" y="349" width="1" height="4" fill="#ff00ff"/>
<rect x="375" y="349" width="1" height="4" fill="#ff00ff"/>
<rect x="205" y="350" width="7" height="2" fill="#000"/>
<rect x="84" y="85" width="1" height="1" fill="#3c3"/>
<rect x="331" y="85" width="1" height="1" fill="#3c3"/>
<rect x="84" y="316" width="1" height="1" fill="#3c3"/>
<rect x="331" y="316" width="1" height="1" fill="#3c3"/>
<path d="M388 33.5H417" stroke="#fff" stroke-width="1"/>
<path d="M388 145.5H417" stroke="#fff" stroke-width="1"/>
<path d="M388 257.5H417" stroke="#fff" stroke-width="1"/>
<path d="M388 368.5H417" stroke="#fff" stroke-width="1"/>
<path d="M413 33.5H417" stroke="#fff" stroke-width="1"/>
<path d="M413 44.670000000000016H417" stroke="#fff" stroke-width="1"/>
<path d="M413 55.84000000000003H417" stroke="#fff" stroke-width="1"/>
<path d="M413 67.01000000000005H417" stroke="#fff" stroke-width="1"/>
<path d="M413 78.18000000000006H417" stroke="#fff" stroke-width="1"/>
<path d="M413 89.35000000000008H417" stroke="#fff" stroke-width="1"/>
<path d="M413 100.5200000000001H417" stroke="#fff" stroke-width="1"/>
<path d="M413 111.69000000000011H417" stroke="#fff" stroke-width="1"/>
<path d="M413 122.86000000000013H417" stroke="#fff" stroke-width="1"/>
<path d="M413 134.03000000000014H417" stroke="#fff" stroke-width="1"/>
<path d="M413 145.20000000000016H417" stroke="#fff" stroke-width="1"/>
<path d="M413 156.37000000000012H417" stroke="#fff" stroke-width="1"/>
<path d="M413 167.54000000000008H417" stroke="#fff" stroke-width="1"/>
<path d="M413 178.71000000000004H417" stroke="#fff" stroke-width="1"/>
<path d="M413 189.88H417" stroke="#fff" stroke-width="1"/>
<path d="M413 201.04999999999995H417" stroke="#fff" stroke-width="1"/>
<path d="M413 212.2199999999999H417" stroke="#fff" stroke-width="1"/>
<path d="M413 223.38999999999987H417" stroke="#fff" stroke-width="1"/>
<path d="M413 234.55999999999983H417" stroke="#fff" stroke-width="1"/>
<path d="M413 245.7299999999998H417" stroke="#fff" stroke-width="1"/>
<path d="M413 256.89999999999975H417" stroke="#fff" stroke-width="1"/>
<path d="M413 268.0699999999997H417" stroke="#fff" stroke-width="1"/>
<path d="M413 279.23999999999967H417" stroke="#fff" stroke-width="1"/>
<path d="M413 290.4099999999996H417" stroke="#fff" stroke-width="1"/>
<path d="M413 301.5799999999996H417" stroke="#fff" stroke-width="1"/>
<path d="M413 312.74999999999955H417" stroke="#fff" stroke-width="1"/>
<path d="M413 323.9199999999995H417" stroke="#fff" stroke-width="1"/>
<path d="M413 335.08999999999946H417" stroke="#fff" stroke-width="1"/>
<path d="M413 346.2599999999994H417" stroke="#fff" stroke-width="1"/>
<path d="M413 357.4299999999994H417" stroke="#fff" stroke-width="1"/>
<path d="M413 368.59999999999934H417" stroke="#fff" stroke-width="1"/>
<text x="412" y="30" text-anchor="end" font-family="Liberation Sans" font-size="11" fill="#fff">1754.687</text>
<text x="412" y="142" text-anchor="end" font-family="Liberation Sans" font-size="11" fill="#fff">1694.355</text>
<text x="412" y="253" text-anchor="end" font-family="Liberation Sans" font-size="11" fill="#fff">1634.023</text>
<text x="412" y="365" text-anchor="end" font-family="Liberation Sans" font-size="11" fill="#fff">1573.691</text>
<path d="M41.5 383V402" stroke="#fff" stroke-width="1"/>
<path d="M152.5 383V402" stroke="#fff" stroke-width="1"/>
<path d="M264.5 383V402" stroke="#fff" stroke-width="1"/>
<path d="M375.5 383V402" stroke="#fff" stroke-width="1"/>
<path d="M41.5 398V402" stroke="#fff" stroke-width="1"/>
<path d="M52.66999999999996 398V402" stroke="#fff" stroke-width="1"/>
<path d="M63.83999999999992 398V402" stroke="#fff" stroke-width="1"/>
<path d="M75.00999999999988 398V402" stroke="#fff" stroke-width="1"/>
<path d="M86.17999999999984 398V402" stroke="#fff" stroke-width="1"/>
<path d="M97.3499999999998 398V402" stroke="#fff" stroke-width="1"/>
<path d="M108.51999999999975 398V402" stroke="#fff" stroke-width="1"/>
<path d="M119.68999999999971 398V402" stroke="#fff" stroke-width="1"/>
<path d="M130.85999999999967 398V402" stroke="#fff" stroke-width="1"/>
<path d="M142.02999999999963 398V402" stroke="#fff" stroke-width="1"/>
<path d="M153.1999999999996 398V402" stroke="#fff" stroke-width="1"/>
<path d="M164.36999999999955 398V402" stroke="#fff" stroke-width="1"/>
<path d="M175.5399999999995 398V402" stroke="#fff" stroke-width="1"/>
<path d="M186.70999999999947 398V402" stroke="#fff" stroke-width="1"/>
<path d="M197.87999999999943 398V402" stroke="#fff" stroke-width="1"/>
<path d="M209.0499999999994 398V402" stroke="#fff" stroke-width="1"/>
<path d="M220.21999999999935 398V402" stroke="#fff" stroke-width="1"/>
<path d="M231.3899999999993 398V402" stroke="#fff" stroke-width="1"/>
<path d="M242.55999999999926 398V402" stroke="#fff" stroke-width="1"/>
<path d="M253.72999999999922 398V402" stroke="#fff" stroke-width="1"/>
<path d="M264.8999999999992 398V402" stroke="#fff" stroke-width="1"/>
<path d="M276.06999999999914 398V402" stroke="#fff" stroke-width="1"/>
<path d="M287.2399999999991 398V402" stroke="#fff" stroke-width="1"/>
<path d="M298.40999999999906 398V402" stroke="#fff" stroke-width="1"/>
<path d="M309.579999999999 398V402" stroke="#fff" stroke-width="1"/>
<path d="M320.749999999999 398V402" stroke="#fff" stroke-width="1"/>
<path d="M331.91999999999894 398V402" stroke="#fff" stroke-width="1"/>
<path d="M343.0899999999989 398V402" stroke="#fff" stroke-width="1"/>
<path d="M354.25999999999885 398V402" stroke="#fff" stroke-width="1"/>
<path d="M365.4299999999988 398V402" stroke="#fff" stroke-width="1"/>
<path d="M376.5999999999988 398V402" stroke="#fff" stroke-width="1"/>
<text x="46" y="395" text-anchor="end" font-family="Liberation Sans" font-size="11" fill="#fff">2739.354</text>
<text x="149" y="395" text-anchor="end" font-family="Liberation Sans" font-size="11" fill="#fff">2799.554</text>
<text x="261" y="395" text-anchor="end" font-family="Liberation Sans" font-size="11" fill="#fff">2859.754</text>
<text x="372" y="395" text-anchor="end" font-family="Liberation Sans" font-size="11" fill="#fff">2919.954</text>
<text x="412" y="395" text-anchor="end" font-family="Liberation Sans" font-size="11" fill="#fff">mm</text>
</svg>
<!-- STATUS BAR -->
<div class="a" style="left:0;top:1008px;width:1917px;height:22px;background:#f0f0f0;border-top:1px solid #dadada"></div>
<div class="a t13" style="left:1px;top:1012px">For Help, press F1</div>
<div class="a" style="left:1547px;top:1011px;width:1px;height:18px;background:#d8d8d8"></div>
<div class="a" style="left:1577px;top:1011px;width:1px;height:18px;background:#d8d8d8"></div>
<div class="a" style="left:1587px;top:1011px;width:1px;height:18px;background:#d8d8d8"></div>
<div class="a" style="left:1628px;top:1011px;width:1px;height:18px;background:#d8d8d8"></div>
<div class="a" style="left:1782px;top:1011px;width:1px;height:18px;background:#d8d8d8"></div>
<div class="a" style="left:1843px;top:1011px;width:1px;height:18px;background:#d8d8d8"></div>
<div class="a" style="left:1876px;top:1011px;width:1px;height:18px;background:#d8d8d8"></div>
<div class="a t13" style="left:1606px;top:1012px">0</div>
<div class="a t13" style="left:1651px;top:1012px">-67.28 ; 74.964 mm</div>
<div class="a t13" style="left:1789px;top:1012px">0 ; 0 mm</div>
<div class="a t13" style="left:1849px;top:1012px;color:#8a8a8a">CAP</div>
<div class="a t13" style="left:1882px;top:1012px">NUM</div>
<svg class="a" style="left:1900px;top:968px" width="17" height="62" viewBox="0 0 17 62"><rect x="9.5" y="3.5" width="5" height="52" rx="2.5" fill="#34444f" stroke="#5a6a76"/><path d="M12 14V52" stroke="#e0301a" stroke-width="2"/><circle cx="12" cy="52" r="5" fill="#e0401a" stroke="#4a5a66" stroke-width="1.2"/></svg>

</body></html>
